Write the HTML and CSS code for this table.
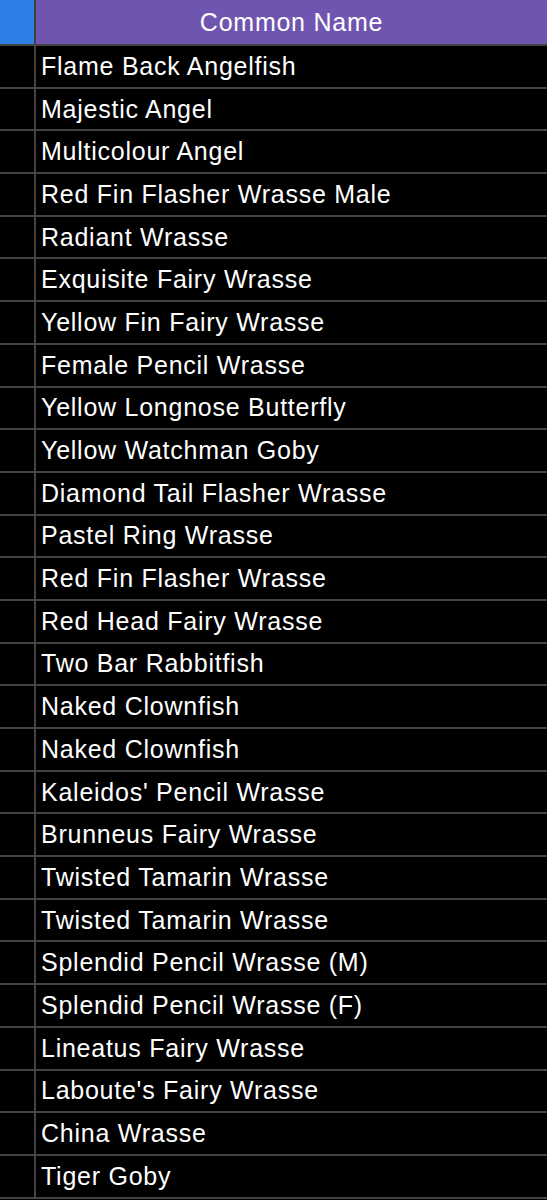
FILE: index.html
```html
<!DOCTYPE html>
<html lang="en">
<head>
  <meta charset="UTF-8" />
  <meta name="viewport" content="width=device-width, initial-scale=1" />
  <title>Fish List</title>
  <link rel="stylesheet" href="styles.css">
</head>
<body>
  <table class="sheet">
    <thead>
      <tr>
        <th class="corner"></th>
        <th class="head">Common Name</th>
      </tr>
    </thead>
    <tbody>
      <tr><td class="idx"></td><td>Flame Back Angelfish</td></tr>
      <tr><td class="idx"></td><td>Majestic Angel</td></tr>
      <tr><td class="idx"></td><td>Multicolour Angel</td></tr>
      <tr><td class="idx"></td><td>Red Fin Flasher Wrasse Male</td></tr>
      <tr><td class="idx"></td><td>Radiant Wrasse</td></tr>
      <tr><td class="idx"></td><td>Exquisite Fairy Wrasse</td></tr>
      <tr><td class="idx"></td><td>Yellow Fin Fairy Wrasse</td></tr>
      <tr><td class="idx"></td><td>Female Pencil Wrasse</td></tr>
      <tr><td class="idx"></td><td>Yellow Longnose Butterfly</td></tr>
      <tr><td class="idx"></td><td>Yellow Watchman Goby</td></tr>
      <tr><td class="idx"></td><td>Diamond Tail Flasher Wrasse</td></tr>
      <tr><td class="idx"></td><td>Pastel Ring Wrasse</td></tr>
      <tr><td class="idx"></td><td>Red Fin Flasher Wrasse</td></tr>
      <tr><td class="idx"></td><td>Red Head Fairy Wrasse</td></tr>
      <tr><td class="idx"></td><td>Two Bar Rabbitfish</td></tr>
      <tr><td class="idx"></td><td>Naked Clownfish</td></tr>
      <tr><td class="idx"></td><td>Naked Clownfish</td></tr>
      <tr><td class="idx"></td><td>Kaleidos' Pencil Wrasse</td></tr>
      <tr><td class="idx"></td><td>Brunneus Fairy Wrasse</td></tr>
      <tr><td class="idx"></td><td>Twisted Tamarin Wrasse</td></tr>
      <tr><td class="idx"></td><td>Twisted Tamarin Wrasse</td></tr>
      <tr><td class="idx"></td><td>Splendid Pencil Wrasse (M)</td></tr>
      <tr><td class="idx"></td><td>Splendid Pencil Wrasse (F)</td></tr>
      <tr><td class="idx"></td><td>Lineatus Fairy Wrasse</td></tr>
      <tr><td class="idx"></td><td>Laboute's Fairy Wrasse</td></tr>
      <tr><td class="idx"></td><td>China Wrasse</td></tr>
      <tr><td class="idx"></td><td>Tiger Goby</td></tr>
    </tbody>
  </table>
</body>
</html>
```

FILE: styles.css
```css
body {
  margin: 0;
  padding: 0;
  background: #000;
  font-family: 'Liberation Sans', Arial, sans-serif;
}
.sheet {
  width: 100%;
  border-collapse: collapse;
  table-layout: fixed;
  color: #fff;
  font-size: 25px;
  letter-spacing: 0.75px;
}
.sheet th,
.sheet td {
  border: 2px solid #434343;
  padding: 0 0 0 5px;
  text-align: left;
  white-space: nowrap;
  font-weight: normal;
}
.sheet thead th {
  height: 44px;
  padding: 0;
  border-top: none;
  border-bottom: 1px solid #434343;
}
.sheet td {
  height: 40.7px;
}
.corner {
  width: 34px;
  background: #2e7fe6;
  border-left: none !important;
}
.head {
  background: #7055b0;
  text-align: center !important;
  border-right: none !important;
}
.idx {
  border-left: none !important;
  padding: 0 !important;
}
.sheet td:last-child {
  border-right: none;
}
```
